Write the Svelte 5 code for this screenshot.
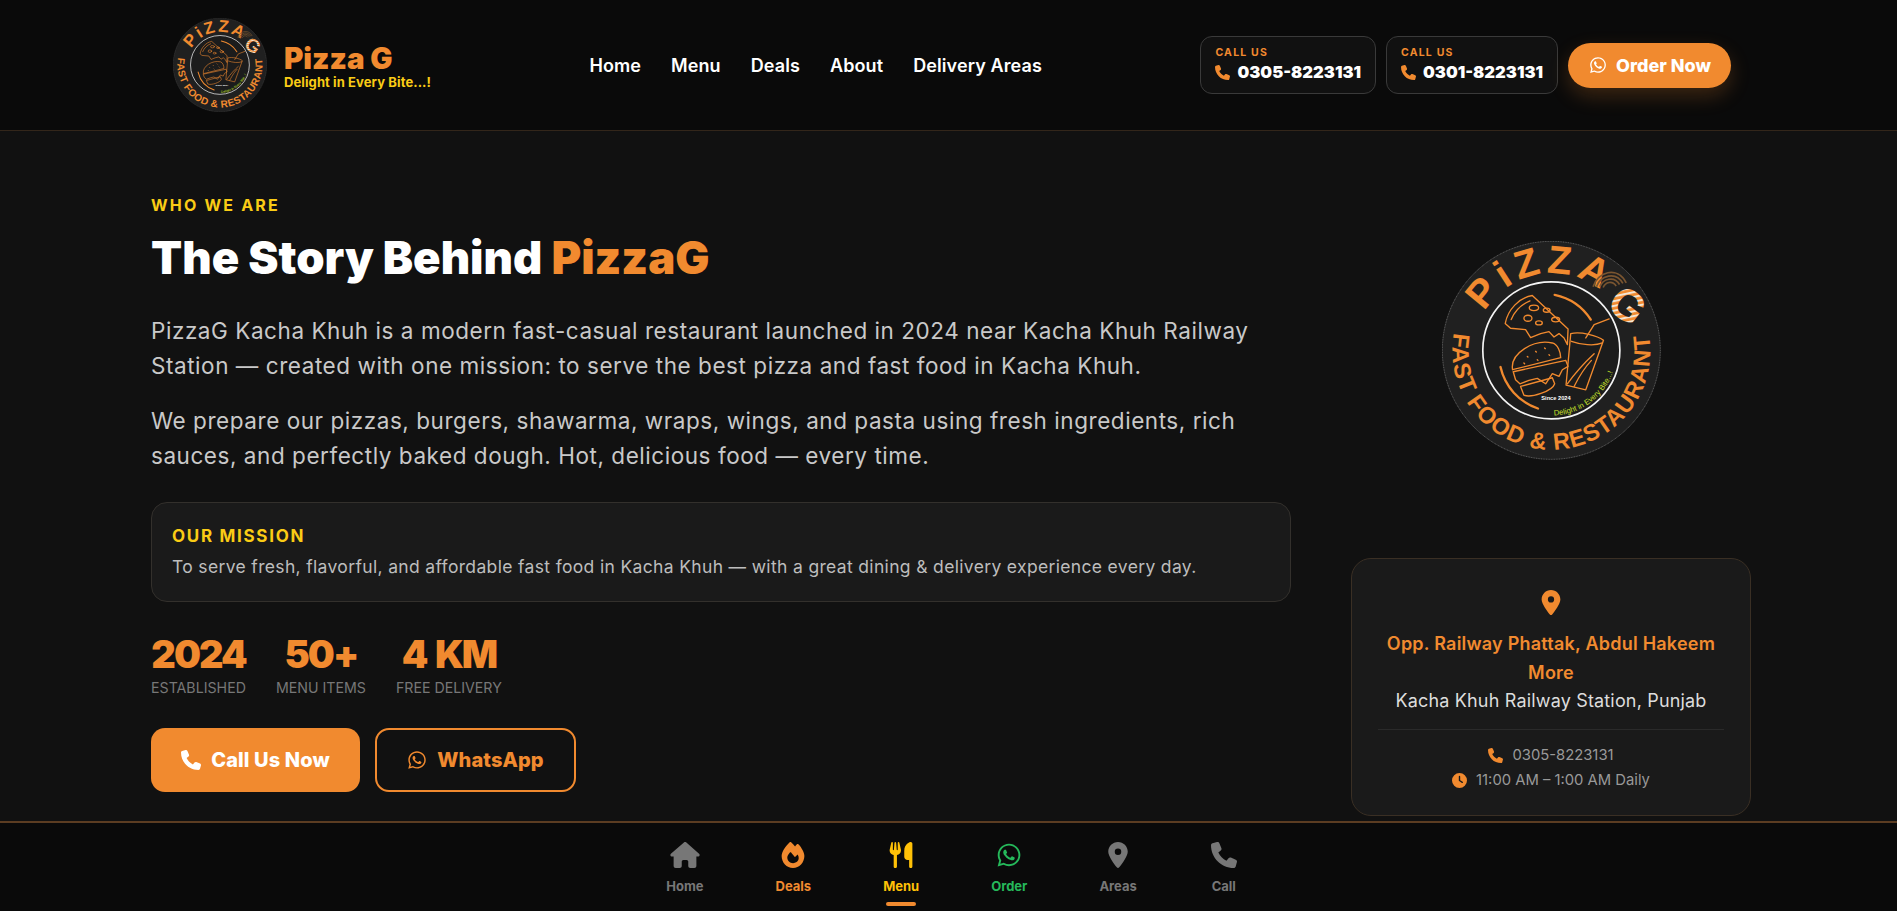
<script lang="ts">
	const icons = {
		phone: { box: '0 0 512 512', d: 'M164.9 24.6c-7.7-18.6-28-28.5-47.4-23.2l-88 24C12.1 30.2 0 46 0 64C0 311.4 200.6 512 448 512c18 0 33.8-12.1 38.6-29.5l24-88c5.3-19.4-4.6-39.7-23.2-47.4l-96-40c-16.3-6.8-35.2-2.1-46.3 11.6L304.7 368C234.3 334.7 177.3 277.7 144 207.3L193.3 167c13.7-11.2 18.4-30 11.6-46.3l-40-96z' },
		whatsapp: { box: '0 0 448 512', d: 'M380.9 97.1C339 55.1 283.2 32 223.9 32c-122.4 0-222 99.6-222 222 0 39.1 10.2 77.3 29.6 111L0 480l117.7-30.9c32.4 17.7 68.9 27 106.1 27h.1c122.3 0 224.1-99.6 224.1-222 0-59.3-25.2-115-67.1-157zm-157 341.6c-33.2 0-65.7-8.9-94-25.7l-6.7-4-69.8 18.3L72 359.2l-4.4-7c-18.5-29.4-28.2-63.3-28.2-98.2 0-101.7 82.8-184.5 184.6-184.5 49.3 0 95.6 19.2 130.4 54.1 34.8 34.9 56.2 81.2 56.1 130.5 0 101.8-84.9 184.6-186.6 184.6zm101.2-138.2c-5.5-2.8-32.8-16.2-37.9-18-5.1-1.9-8.8-2.8-12.5 2.8-3.7 5.6-14.3 18-17.6 21.8-3.2 3.7-6.5 4.2-12 1.4-32.6-16.3-54-29.1-75.5-66-5.7-9.8 5.7-9.1 16.3-30.3 1.8-3.7.9-6.9-.5-9.7-1.4-2.8-12.5-30.1-17.1-41.2-4.5-10.8-9.1-9.3-12.5-9.5-3.2-.2-6.9-.2-10.6-.2-3.7 0-9.7 1.4-14.8 6.9-5.1 5.6-19.4 19-19.4 46.3 0 27.3 19.9 53.7 22.6 57.4 2.8 3.7 39.1 59.7 94.8 83.8 35.2 15.2 49 16.5 66.6 13.9 10.7-1.6 32.8-13.4 37.4-26.4 4.6-13 4.6-24.1 3.2-26.4-1.3-2.5-5-3.9-10.5-6.6z' },
		pin: { box: '0 0 384 512', d: 'M215.7 499.2C267 435 384 279.4 384 192C384 86 298 0 192 0S0 86 0 192c0 87.4 117 243 168.3 307.2c12.3 15.3 35.1 15.3 47.4 0zM192 128a64 64 0 1 1 0 128 64 64 0 1 1 0-128z' },
		clock: { box: '0 0 512 512', d: 'M256 0a256 256 0 1 1 0 512A256 256 0 1 1 256 0zM232 120V256c0 8 4 15.5 10.7 20l96 64c11 7.4 25.9 4.4 33.3-6.7s4.4-25.9-6.7-33.3L280 243.2V120c0-13.3-10.7-24-24-24s-24 10.7-24 24z' },
		house: { box: '0 0 576 512', d: 'M575.8 255.5c0 18-15 32.1-32 32.1h-32l.7 160.2c0 2.7-.2 5.4-.5 8.1V472c0 22.1-17.9 40-40 40H456c-1.1 0-2.2 0-3.3-.1c-1.4 .1-2.8 .1-4.2 .1H416 392c-22.1 0-40-17.9-40-40V448 384c0-17.7-14.3-32-32-32H256c-17.7 0-32 14.3-32 32v64 24c0 22.1-17.9 40-40 40H160 128.1c-1.5 0-3-.1-4.5-.2c-1.2 .1-2.4 .2-3.6 .2H104c-22.1 0-40-17.9-40-40V360c0-.9 0-1.9 .1-2.8V287.6H32c-18 0-32-14-32-32.1c0-9 3-17 10-24L266.4 8c7-7 15-8 22-8s15 2 21 7L564.8 231.5c8 7 12 15 11 24z' },
		fire: { box: '0 0 448 512', d: 'M159.3 5.4c7.8-7.3 19.9-7.2 27.7 .1c27.6 25.9 53.5 53.8 77.7 84c11-14.4 23.5-30.1 37-42.9c7.9-7.4 20.1-7.4 28 .1c34.6 33 63.9 76.6 84.5 118c20.3 40.8 33.8 82.5 33.8 111.9C448 404.2 348.2 512 224 512C98.4 512 0 404.1 0 276.5c0-38.4 17.8-85.3 45.4-131.7C73.3 97.7 112.7 48.6 159.3 5.4zM225.7 416c25.3 0 47.7-7 68.8-21c42.1-29.4 53.4-88.2 28.1-134.4c-4.5-9-16-9.6-22.5-2l-25.2 29.3c-6.6 7.6-18.5 7.4-24.7-.5c-16.5-21-46-58.5-62.8-79.8c-6.3-8-18.3-8.1-24.7-.1c-33.8 42.5-50.8 69.3-50.8 99.4C112 375.4 162.6 416 225.7 416z' },
		utensils: { box: '0 0 448 512', d: 'M416 0C400 0 288 32 288 176V288c0 35.3 28.7 64 64 64h32V480c0 17.7 14.3 32 32 32s32-14.3 32-32V352 240 32c0-17.7-14.3-32-32-32zM64 16C64 7.8 57.9 1 49.7 .1S34.2 4.6 32.4 12.5L2.1 148.8C.7 155.1 0 161.5 0 167.9c0 45.9 35.1 83.6 80 87.7V480c0 17.7 14.3 32 32 32s32-14.3 32-32V255.6c44.9-4.1 80-41.8 80-87.7c0-6.4-.7-12.8-2.1-19.1L191.6 12.5c-1.8-8-9.3-13.3-17.4-12.4S160 7.8 160 16V150.2c0 5.4-4.4 9.8-9.8 9.8c-5.1 0-9.3-3.9-9.8-9L127.9 14.6C127.2 6.3 120.3 0 112 0s-15.2 6.3-15.9 14.6L83.7 151c-.5 5.1-4.7 9-9.8 9c-5.4 0-9.8-4.4-9.8-9.8V16z' }
	};

	const links = ['Home', 'Menu', 'Deals', 'About', 'Delivery Areas'];
	const calls = ['0305-8223131', '0301-8223131'];
	const stats = [
		{ value: '2024', label: 'Established' },
		{ value: '50+', label: 'Menu Items' },
		{ value: '4 KM', label: 'Free Delivery' }
	];
	const tabs = [
		{ label: 'Home', icon: 'house', tone: 'grey' },
		{ label: 'Deals', icon: 'fire', tone: 'orange' },
		{ label: 'Menu', icon: 'utensils', tone: 'yellow', active: true },
		{ label: 'Order', icon: 'whatsapp', tone: 'green' },
		{ label: 'Areas', icon: 'pin', tone: 'grey' },
		{ label: 'Call', icon: 'phone', tone: 'grey' }
	];
</script>

{#snippet icon(name, cls)}
	<svg class={cls} viewBox={icons[name].box} aria-hidden="true"><path fill="currentColor" d={icons[name].d} /></svg>
{/snippet}

{#snippet logo(id, cls)}
	<svg class={cls} viewBox="65 35 655 655" role="img" aria-label="PizzaG logo">
		<defs>
			<path id="{id}-top" d="M 193 247 A 230 230 0 0 1 555 199" />
			<path id="{id}-bottom" d="M 101 310 A 296 296 0 1 0 685 320" />
			<path id="{id}-tag" d="M 400 557 A 195 195 0 0 0 586 386" />
			<pattern id="{id}-stripes" width="14" height="14" patternUnits="userSpaceOnUse" patternTransform="rotate(40)">
				<rect width="14" height="14" fill="#f18a2f" />
				<rect width="6" height="14" fill="#f3e6d6" />
			</pattern>
		</defs>
		<circle cx="392" cy="362" r="326" fill="#202020" stroke="#8b8b8b" stroke-width="2" stroke-dasharray="3 2" />
		<circle cx="392" cy="362" r="205" fill="#1c1c1c" stroke="#f4f4f4" stroke-width="5" />
		<text class="logo-top" font-size="118"><textPath href="#{id}-top" textLength="398" lengthAdjust="spacing">PiZZA</textPath></text>
		<g fill="none" stroke="#7a5530" stroke-width="5">
			<path d="M 517 172 C 528 128 590 108 616 160" />
			<path d="M 527 172 C 538 138 585 124 606 162" />
			<path d="M 537 172 C 546 148 580 138 596 165" />
			<path d="M 547 174 C 554 158 574 152 586 170" />
		</g>
		<text class="logo-g" font-size="132" fill="url(#{id}-stripes)" transform="translate(552 232) rotate(38)">G</text>
		<text class="logo-bottom" font-size="70"><textPath href="#{id}-bottom" textLength="1030" lengthAdjust="spacing">FAST FOOD &amp; RESTAURANT</textPath></text>

		<g fill="none" stroke="#f18a2f" stroke-width="4" stroke-linecap="round" stroke-linejoin="round">
			<path d="M 402 196 A 170 170 0 0 1 510 270" stroke-width="7" />
			<path d="M 240 412 A 170 170 0 0 0 352 536" stroke-width="7" />
			<!-- pizza slice -->
			<path d="M 254 282 C 262 240 295 205 335 198 L 442 298 L 440 345 L 430 325 L 415 312 L 400 322 L 385 306 L 360 312 L 330 324 L 315 300 L 270 296 Z" />
			<path d="M 272 270 C 282 245 300 226 328 214" />
			<ellipse cx="340" cy="235" rx="14" ry="8" />
			<ellipse cx="322" cy="266" rx="12" ry="9" />
			<ellipse cx="378" cy="242" rx="10" ry="6" />
			<ellipse cx="405" cy="270" rx="12" ry="7" />
			<ellipse cx="355" cy="280" rx="10" ry="6" />
			<!-- burger -->
			<path d="M 276 420 C 268 370 340 328 395 340 C 412 345 420 368 420 384 Z" />
			<path d="M 278 426 L 435 392 L 442 410 L 425 420 L 415 440 L 395 432 L 375 462 L 350 446 L 325 452 L 298 462 L 285 450 Z" />
			<path d="M 300 470 L 395 444 L 402 462 C 395 485 330 505 310 496 Z" />
			<path d="M 320 380 L 322 382 M 345 365 L 347 367 M 372 355 L 374 357 M 350 390 L 352 392 M 385 375 L 387 377 M 310 400 L 312 402" />
			<!-- cup -->
			<path d="M 450 312 C 480 305 530 318 548 332 L 495 480 L 436 466 Z" />
			<path d="M 452 335 C 480 345 520 350 545 340" />
			<path d="M 440 462 C 470 420 490 400 520 372 M 460 470 C 480 430 495 410 512 392" />
			<path d="M 495 325 L 520 285 L 565 268" />
		</g>
		<text class="logo-since" x="362" y="510" font-size="17">Since 2024</text>
		<text class="logo-tag" font-size="23"><textPath href="#{id}-tag">Delight in Every Bite...!</textPath></text>
	</svg>
{/snippet}

<div class="page">
	<header class="topbar">
		<div class="brand">
			{@render logo('nav', 'brand-logo')}
			<div class="brand-text">
				<div class="brand-name">Pizza G</div>
				<div class="brand-tag">Delight in Every Bite...!</div>
			</div>
		</div>

		<nav class="links">
			{#each links as link}
				<span>{link}</span>
			{/each}
		</nav>

		<div class="actions">
			{#each calls as call}
				<div class="call-box">
					<div class="call-label">CALL US</div>
					<div class="call-number">{@render icon('phone', 'call-icon')}{call}</div>
				</div>
			{/each}
			<div class="order-btn">{@render icon('whatsapp', 'order-icon')}Order Now</div>
		</div>
	</header>

	<main class="about">
		<section class="story">
			<div class="eyebrow">WHO WE ARE</div>
			<h1>The Story Behind <span>PizzaG</span></h1>
			<p>PizzaG Kacha Khuh is a modern fast-casual restaurant launched in 2024 near Kacha Khuh Railway Station — created with one mission: to serve the best pizza and fast food in Kacha Khuh.</p>
			<p>We prepare our pizzas, burgers, shawarma, wraps, wings, and pasta using fresh ingredients, rich sauces, and perfectly baked dough. Hot, delicious food — every time.</p>

			<div class="mission">
				<h3>OUR MISSION</h3>
				<div>To serve fresh, flavorful, and affordable fast food in Kacha Khuh — with a great dining &amp; delivery experience every day.</div>
			</div>

			<div class="stats">
				{#each stats as stat}
					<div class="stat">
						<div class="stat-value">{stat.value}</div>
						<div class="stat-label">{stat.label}</div>
					</div>
				{/each}
			</div>

			<div class="cta">
				<div class="btn btn-solid">{@render icon('phone', 'btn-icon')}Call Us Now</div>
				<div class="btn btn-line">{@render icon('whatsapp', 'btn-icon')}WhatsApp</div>
			</div>
		</section>

		<aside class="side">
			{@render logo('hero', 'hero-logo')}
			<div class="info-card">
				{@render icon('pin', 'info-pin')}
				<div class="info-address">Opp. Railway Phattak, Abdul Hakeem More</div>
				<div class="info-city">Kacha Khuh Railway Station, Punjab</div>
				<div class="info-line">{@render icon('phone', 'info-icon')}0305-8223131</div>
				<div class="info-line">{@render icon('clock', 'info-icon')}11:00 AM – 1:00 AM Daily</div>
			</div>
		</aside>
	</main>

	<nav class="tabbar">
		{#each tabs as tab}
			<div class="tab {tab.tone}">
				{@render icon(tab.icon, 'tab-icon')}
				<span>{tab.label}</span>
				{#if tab.active}<i class="tab-mark"></i>{/if}
			</div>
		{/each}
	</nav>
</div>

<style>
	:global(body) {
		background: #111;
		font-family: Inter, "Open Sans", sans-serif;
	}

	.page {
		height: 911px;
		display: flex;
		flex-direction: column;
		overflow: hidden;
	}

	.topbar {
		flex: 0 0 131px;
		box-sizing: border-box;
		display: flex;
		align-items: center;
		justify-content: space-between;
		padding: 0 166px 0 173px;
		background: #0a0a0a;
		border-bottom: 1px solid #33261a;
	}

	.brand {
		display: flex;
		align-items: center;
		gap: 17px;
	}

	:global(.brand-logo) {
		width: 94px;
		height: 94px;
	}

	.brand-name {
		font-size: 29.5px;
		font-weight: 900;
		line-height: 34px;
		color: #f18a2f;
	}

	.brand-tag {
		font-size: 13px;
		font-weight: 700;
		line-height: 15px;
		color: #facc15;
		letter-spacing: 0.1px;
	}

	.links {
		display: flex;
		gap: 30px;
		font-size: 18px;
		font-weight: 600;
		letter-spacing: 0.1px;
		color: #fff;
	}

	.actions {
		display: flex;
		align-items: center;
		gap: 10px;
	}

	.call-box {
		box-sizing: border-box;
		height: 58px;
		padding: 9px 14px 0;
		background: #111;
		border: 1px solid #3a3a3a;
		border-radius: 12px;
	}

	.call-label {
		font-size: 10.5px;
		font-weight: 700;
		letter-spacing: 1.2px;
		line-height: 14px;
		color: #f18a2f;
	}

	.call-number {
		display: flex;
		align-items: center;
		gap: 7px;
		font-size: 16.6px;
		font-weight: 900;
		line-height: 24px;
		color: #fff;
	}

	:global(.call-icon) {
		width: 15px;
		height: 15px;
		color: #f18a2f;
	}

	.order-btn {
		display: flex;
		align-items: center;
		gap: 9px;
		height: 45px;
		padding: 0 20px 0 21px;
		border-radius: 23px;
		background: #f18a2f;
		color: #fff;
		font-size: 18px;
		font-weight: 800;
		box-shadow: 0 8px 20px rgba(241, 138, 47, 0.22);
	}

	:global(.order-icon) {
		width: 18px;
		height: 18px;
	}

	.about {
		flex: 1;
		min-height: 0;
		display: grid;
		grid-template-columns: 1140px 400px;
		gap: 60px;
		padding: 64px 146px 0 151px;
		background: #111;
	}

	.eyebrow {
		font-size: 16px;
		font-weight: 700;
		letter-spacing: 2.2px;
		line-height: 20px;
		color: #facc15;
	}

	h1 {
		margin: 15px 0 27px;
		font-size: 45.4px;
		font-weight: 900;
		line-height: 56px;
		color: #fff;
	}

	h1 span {
		color: #f18a2f;
	}

	p {
		margin: 0 0 20px;
		font-size: 22.5px;
		letter-spacing: 0.55px;
		line-height: 35px;
		color: #c9c9c9;
	}

	.mission {
		box-sizing: border-box;
		height: 100px;
		margin-top: 29px;
		padding: 22px 20px 0;
		background: #1a1a1a;
		border: 1px solid #33302c;
		border-radius: 16px;
		font-size: 17.5px;
		letter-spacing: 0.34px;
		line-height: 26px;
		color: #bdbdbd;
	}

	.mission h3 {
		margin: 0 0 7px;
		font-size: 17px;
		font-weight: 700;
		letter-spacing: 1.7px;
		line-height: 22px;
		color: #facc15;
	}

	.stats {
		display: flex;
		gap: 30px;
		margin-top: 29px;
	}

	.stat {
		text-align: center;
	}

	.stat-value {
		font-size: 38px;
		font-weight: 900;
		letter-spacing: -2px;
		word-spacing: 3px;
		line-height: 46px;
		color: #f18a2f;
	}

	.stat-label {
		margin-top: 1px;
		font-size: 14.2px;
		line-height: 20px;
		text-transform: uppercase;
		color: #777;
	}

	.cta {
		display: flex;
		gap: 15px;
		margin-top: 30px;
	}

	.btn {
		box-sizing: border-box;
		height: 64px;
		display: flex;
		align-items: center;
		justify-content: center;
		gap: 10px;
		border-radius: 14px;
		font-size: 20px;
		font-weight: 800;
		letter-spacing: 0.1px;
	}

	.btn-solid {
		width: 209px;
		background: #f18a2f;
		color: #fff;
	}

	.btn-line {
		width: 201px;
		border: 2px solid #f18a2f;
		color: #f18a2f;
	}

	:global(.btn-icon) {
		width: 20px;
		height: 20px;
	}

	.side {
		display: flex;
		flex-direction: column;
		align-items: center;
	}

	:global(.hero-logo) {
		width: 219px;
		height: 219px;
		margin-top: 46px;
	}

	.info-card {
		box-sizing: border-box;
		width: 100%;
		height: 258px;
		margin-top: 98px;
		padding: 31px 26px 0;
		text-align: center;
		background: #1a1a1a;
		border: 1px solid #3a2f24;
		border-radius: 20px;
	}

	:global(.info-pin) {
		display: block;
		width: 20px;
		height: 25px;
		margin: 0 auto 14px;
		color: #f18a2f;
	}

	.info-address {
		font-size: 18px;
		font-weight: 600;
		letter-spacing: 0.23px;
		line-height: 29px;
		color: #f18a2f;
	}

	.info-city {
		font-size: 18px;
		letter-spacing: 0.17px;
		line-height: 27px;
		color: #ddd;
		padding-bottom: 15px;
		border-bottom: 1px solid #2a2a2a;
		margin-bottom: 13px;
	}

	.info-line {
		display: flex;
		align-items: center;
		justify-content: center;
		gap: 9px;
		font-size: 14.8px;
		line-height: 25px;
		color: #999;
	}

	:global(.info-icon) {
		width: 15px;
		height: 15px;
		color: #f18a2f;
	}

	.tabbar {
		flex: 0 0 90px;
		box-sizing: border-box;
		display: flex;
		justify-content: center;
		gap: 72px;
		padding-left: 8px;
		background: #0a0a0a;
		border-top: 2px solid #5c3d22;
	}

	.tab {
		position: relative;
		padding-top: 19px;
		display: flex;
		flex-direction: column;
		align-items: center;
		gap: 10px;
		font-size: 13px;
		font-weight: 700;
		line-height: 16px;
	}

	:global(.tab-icon) {
		height: 26px;
		width: 30px;
	}

	.grey { color: #777; }
	.orange { color: #f18a2f; }
	.yellow { color: #ffc107; }
	.green { color: #25b85a; }

	.tab-mark {
		position: absolute;
		left: 50%;
		bottom: 5px;
		width: 30px;
		height: 4px;
		margin-left: -15px;
		border-radius: 2px;
		background: #f18a2f;
	}

	.logo-top, .logo-g, .logo-bottom, .logo-since, .logo-tag {
		font-family: "Liberation Sans", Arial, sans-serif;
		font-weight: 700;
	}

	.logo-top, .logo-bottom {
		fill: #f18a2f;
	}

	.logo-since {
		fill: #fff;
	}

	.logo-tag {
		fill: #c6e02b;
		font-weight: 400;
	}
</style>
